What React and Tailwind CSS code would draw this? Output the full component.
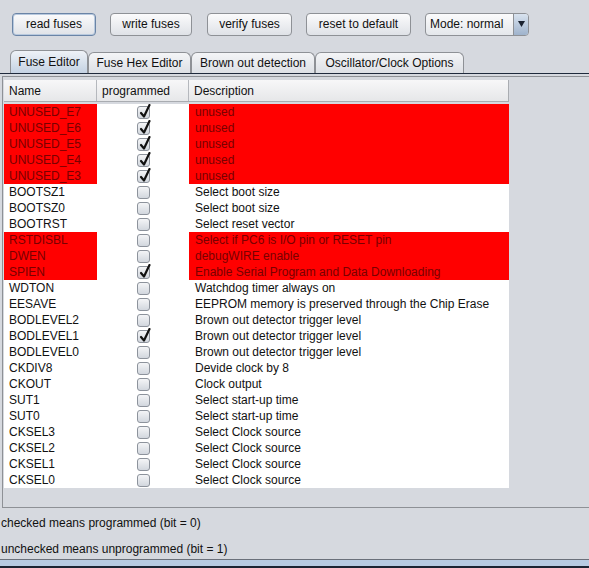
import React from "react";

const fuses = [
  { name: "UNUSED_E7", on: true, desc: "unused", red: true },
  { name: "UNUSED_E6", on: true, desc: "unused", red: true },
  { name: "UNUSED_E5", on: true, desc: "unused", red: true },
  { name: "UNUSED_E4", on: true, desc: "unused", red: true },
  { name: "UNUSED_E3", on: true, desc: "unused", red: true },
  { name: "BOOTSZ1", on: false, desc: "Select boot size" },
  { name: "BOOTSZ0", on: false, desc: "Select boot size" },
  { name: "BOOTRST", on: false, desc: "Select reset vector" },
  { name: "RSTDISBL", on: false, desc: "Select if PC6 is I/O pin or RESET pin", red: true },
  { name: "DWEN", on: false, desc: "debugWIRE enable", red: true },
  { name: "SPIEN", on: true, desc: "Enable Serial Program and Data Downloading", red: true },
  { name: "WDTON", on: false, desc: "Watchdog timer always on" },
  { name: "EESAVE", on: false, desc: "EEPROM memory is preserved through the Chip Erase" },
  { name: "BODLEVEL2", on: false, desc: "Brown out detector trigger level" },
  { name: "BODLEVEL1", on: true, desc: "Brown out detector trigger level" },
  { name: "BODLEVEL0", on: false, desc: "Brown out detector trigger level" },
  { name: "CKDIV8", on: false, desc: "Devide clock by 8" },
  { name: "CKOUT", on: false, desc: "Clock output" },
  { name: "SUT1", on: false, desc: "Select start-up time" },
  { name: "SUT0", on: false, desc: "Select start-up time" },
  { name: "CKSEL3", on: false, desc: "Select Clock source" },
  { name: "CKSEL2", on: false, desc: "Select Clock source" },
  { name: "CKSEL1", on: false, desc: "Select Clock source" },
  { name: "CKSEL0", on: false, desc: "Select Clock source" },
];

const Button = ({ label, width, left, focused }) => (
  <button
    className={`h-[23px] rounded-[4px] border bg-gradient-to-b from-[#fbfbfc] to-[#dfe2e7] text-[12px] text-[#111] ${width} ${left} ${
      focused ? "border-[#6a84a6] shadow-[inset_0_0_0_1px_#b8c9de]" : "border-[#8e9196]"
    }`}
  >
    {label}
  </button>
);

const CheckBox = ({ on }) => (
  <div className="relative w-[13px] h-[13px] rounded-[3px] border border-[#8d939c] bg-gradient-to-b from-[#f4f5f7] to-[#d2d7de]">
    {on && (
      <svg className="absolute left-[1px] top-[-3px]" width="12" height="15" viewBox="0 0 12 15">
        <path d="M2 9 L5 12.5 L10.5 1" fill="none" stroke="#111" strokeWidth="2.2" strokeLinecap="round" strokeLinejoin="round" />
      </svg>
    )}
  </div>
);

const Tab = ({ label, width, active }) => (
  <div
    className={`flex items-center justify-center rounded-t-[6px] border border-b-0 border-[#8e9196] text-[12px] text-[#111] ${width} ${
      active ? "h-[23px] bg-gradient-to-b from-[#eef2f7] to-[#c4d2e3]" : "h-[21px] bg-gradient-to-b from-[#f4f5f7] to-[#dde0e5]"
    }`}
  >
    {label}
  </div>
);

export default function App() {
  return (
    <div
      className="w-[589px] h-[568px] bg-[#d6d9df] overflow-hidden flex flex-col text-[12px] text-[#111]"
      style={{ fontFamily: '"Liberation Sans", Arial, sans-serif' }}
    >
      <div className="flex items-center pt-[12px] pl-[12px] h-[36px]">
        <Button label="read fuses" width="w-[84px]" left="" focused />
        <Button label="write fuses" width="w-[82px]" left="ml-[14px]" />
        <Button label="verify fuses" width="w-[85px]" left="ml-[15px]" />
        <Button label="reset to default" width="w-[105px]" left="ml-[14px]" />
        <div className="ml-[14px] h-[23px] w-[104px] flex rounded-[4px] border border-[#8e9196] bg-gradient-to-b from-[#fbfbfc] to-[#e4e7eb] overflow-hidden">
          <div className="flex-1 flex items-center pl-[4px] text-[12px]">Mode: normal</div>
          <div className="w-[15px] flex items-center justify-center border-l border-[#8e9196] bg-gradient-to-b from-[#d9e3ef] to-[#9fb3cc]">
            <svg width="7" height="6" viewBox="0 0 7 6">
              <path d="M0 0 H7 L3.5 6 Z" fill="#1a2230" />
            </svg>
          </div>
        </div>
      </div>

      <div className="flex items-end pl-[10px] mt-[14px] h-[23px]">
        <Tab label="Fuse Editor" width="w-[78px]" active />
        <Tab label="Fuse Hex Editor" width="w-[103px]" />
        <Tab label="Brown out detection" width="w-[124px]" />
        <Tab label="Oscillator/Clock Options" width="w-[149px]" />
      </div>
      <div className="h-px bg-[#1f2a3c]" />

      <div className="mt-[2px] ml-[2px] h-[432px] border-t border-l border-b border-[#8e9196] pt-[3px] pl-px">
        <div className="w-[505px]">
          <div className="flex h-[22px] border-b border-[#a9acb1] bg-gradient-to-b from-[#f7f7f8] to-[#e6e7e9] border-r">
            <div className="w-[93px] flex items-center pl-[5px] border-r border-[#b5b8bd]">Name</div>
            <div className="w-[92px] flex items-center pl-[5px] border-r border-[#b5b8bd]">programmed</div>
            <div className="flex-1 flex items-center pl-[5px]">Description</div>
          </div>
          <div className="mt-[2px] bg-white">
            {fuses.map((f) => (
              <div key={f.name} className="flex h-[16px] leading-[17px]">
                <div className={`w-[93px] pl-[5px] ${f.red ? "bg-[#ff0000] text-[#780000]" : ""}`}>{f.name}</div>
                <div className="w-[92px] flex items-center justify-center">
                  <CheckBox on={f.on} />
                </div>
                <div className={`flex-1 pl-[6px] whitespace-nowrap ${f.red ? "bg-[#ff0000] text-[#780000]" : ""}`}>{f.desc}</div>
              </div>
            ))}
          </div>
        </div>
      </div>

      <div className="mt-[8px] pl-px h-[14px] leading-[14px]">checked means programmed (bit = 0)</div>
      <div className="mt-[12px] pl-px h-[14px] leading-[14px]">unchecked means unprogrammed (bit = 1)</div>

      <div className="mt-auto h-[9px] flex flex-col">
        <div className="h-px bg-[#6a707a]" />
        <div className="flex-1 bg-[#b8cbe2]" />
        <div className="h-[2px] bg-[#1c2433]" />
      </div>
    </div>
  );
}
